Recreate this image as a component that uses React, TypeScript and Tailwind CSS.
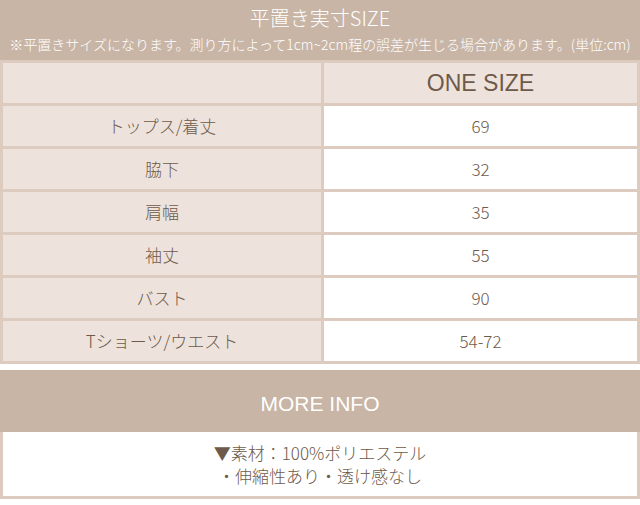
import React from 'react';

const rows: [string, string][] = [
  ['トップス/着丈', '69'],
  ['脇下', '32'],
  ['肩幅', '35'],
  ['袖丈', '55'],
  ['バスト', '90'],
  ['Tショーツ/ウエスト', '54-72'],
];

const jp = { fontFamily: '"Noto Sans CJK JP", "Noto Sans", sans-serif' };

export default function App() {
  return (
    <div className="w-[640px] h-[505px] bg-white overflow-hidden font-light" style={jp}>
      {/* size header */}
      <div className="h-[60px] bg-[#c8b5a6] flex flex-col items-center text-white">
        <div className="text-[20px] leading-[26px] mt-[5px]">平置き実寸SIZE</div>
        <div className="text-[14px] leading-[20px] mt-[3px] whitespace-nowrap">
          ※平置きサイズになります。測り方によって1cm~2cm程の誤差が生じる場合があります。(単位:cm)
        </div>
      </div>

      {/* size table */}
      <div className="grid grid-cols-[318px_313px] auto-rows-[40px] gap-[3px] p-[3px] bg-[#dccbbe] text-[#6e5a4b]">
        <div className="bg-[#ede3dc]"></div>
        <div className="bg-[#ede3dc] flex items-center justify-center text-[23px] font-['Liberation_Sans',sans-serif]">
          ONE SIZE
        </div>
        {rows.map(([label, value]) => (
          <React.Fragment key={label}>
            <div className="bg-[#ede3dc] flex items-center justify-center text-[17px]">{label}</div>
            <div className="bg-white flex items-center justify-center text-[17px]">{value}</div>
          </React.Fragment>
        ))}
      </div>

      {/* more info */}
      <div className="mt-[6px] h-[62px] bg-[#c8b5a6] flex items-center justify-center text-white text-[21px] pt-[6px] font-['Liberation_Sans',sans-serif]">
        MORE INFO
      </div>
      <div className="h-[67px] border-x-[3px] border-b-[3px] border-[#dccbbe] flex flex-col items-center justify-center text-[17px] leading-[23px] text-[#6e5a4b]">
        <div>▼素材：100%ポリエステル</div>
        <div>・伸縮性あり・透け感なし</div>
      </div>
    </div>
  );
}
